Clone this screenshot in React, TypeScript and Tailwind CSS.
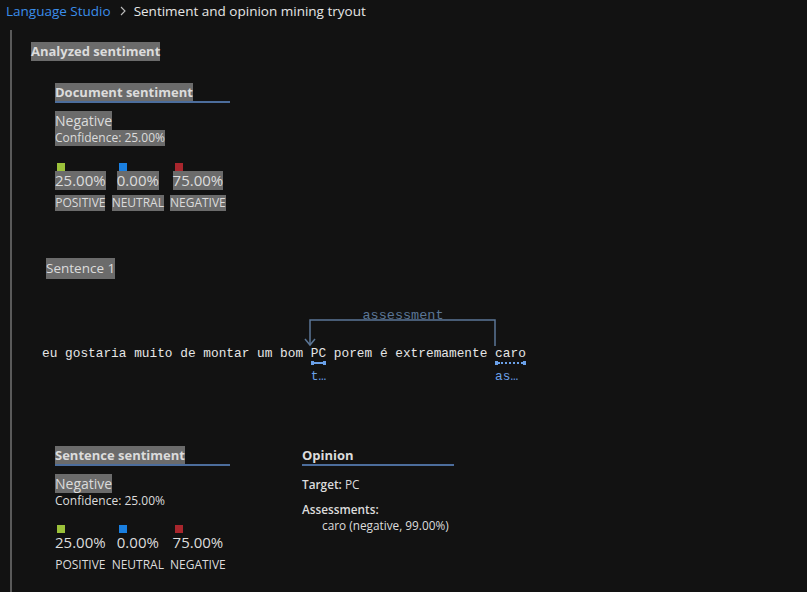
import React from 'react';

const HL = 'bg-[#6b6b6b]';

type Score = { label: string; value: string; color: string };

const SCORES: Score[] = [
  { label: 'POSITIVE', value: '25.00%', color: 'bg-[#9bc13a]' },
  { label: 'NEUTRAL', value: '0.00%', color: 'bg-[#1a7fe0]' },
  { label: 'NEGATIVE', value: '75.00%', color: 'bg-[#a8262d]' },
];

const SectionTitle: React.FC<{ title: string; width: string; highlight?: boolean }> = ({ title, width, highlight }) => (
  <div className={`${width} flex border-b-2 border-[#4c6d9c]`}>
    <span className={`${highlight ? HL : ''} block h-[18px] leading-[18px] text-[13px] font-bold text-[#dcdcdc]`}>{title}</span>
  </div>
);

const Scores: React.FC<{ highlight?: boolean }> = ({ highlight }) => (
  <div className="flex gap-[6px]">
    {SCORES.map((s) => (
      <div key={s.label} className="flex flex-col items-center">
        <div className="flex flex-col items-start">
          <div className={`w-[8px] h-[8px] ml-[2px] ${s.color}`} />
          <span className={`${highlight ? HL : ''} block h-[19px] leading-[19px] text-[15px] text-[#dcdcdc]`}>{s.value}</span>
        </div>
        <span className={`${highlight ? HL : ''} mt-[5px] block h-[16px] leading-[16px] text-[12px] text-[#dcdcdc]`}>{s.label}</span>
      </div>
    ))}
  </div>
);

const Sentence: React.FC = () => (
  <div className="relative h-[85px] pt-[41px] font-['Liberation_Mono',monospace] text-[12.8px] leading-[16px] text-[#e6e6e6]">
    <svg className="absolute left-0 top-0" width="480" height="45" viewBox="0 0 480 45">
      <path d="M453 41 V15 H268 V40" fill="none" stroke="#5b7696" strokeWidth="1.5" />
      <path d="M263 34 L268 40 L273 34" fill="none" stroke="#5b7696" strokeWidth="1.5" />
      <text x="361" y="14" textAnchor="middle" fontFamily="Liberation Mono, monospace" fontSize="13.5" fill="#5b7696">assessment</text>
    </svg>
    <div className="whitespace-pre">
      <span>eu gostaria muito de montar um bom </span>
      <span className="relative inline-block">
        PC
        <span className="absolute left-0 right-0 top-[15px] flex items-center">
          <span className="w-[3px] h-[4px] bg-[#6aa0e8]" />
          <span className="flex-1 h-[2px] bg-[#6aa0e8]" />
          <span className="w-[3px] h-[4px] bg-[#6aa0e8]" />
        </span>
        <span className="absolute left-0 top-[23px] text-[#6aa0e8]">t…</span>
      </span>
      <span> porem é extremamente </span>
      <span className="relative inline-block">
        caro
        <span className="absolute left-0 right-0 top-[15px] flex items-center">
          <span className="w-[3px] h-[4px] bg-[#6aa0e8]" />
          <span className="flex-1 border-t-2 border-dotted border-[#6aa0e8]" />
          <span className="w-[3px] h-[4px] bg-[#6aa0e8]" />
        </span>
        <span className="absolute left-0 top-[23px] text-[#6aa0e8]">as…</span>
      </span>
    </div>
  </div>
);

const App: React.FC = () => {
  return (
    <div className="w-[807px] h-[592px] overflow-hidden bg-[#121212] font-['Segoe_UI','Open_Sans',sans-serif] text-[#dcdcdc]">
      <div className="flex items-center h-[22px] pl-[6px] text-[13.5px]">
        <span className="text-[#3b8eea]">Language Studio</span>
        <svg className="ml-[9px] mr-[7px]" width="7" height="10" viewBox="0 0 7 10">
          <path d="M1 1 L5 5 L1 9" fill="none" stroke="#bdbdbd" strokeWidth="1.1" />
        </svg>
        <span className="text-[#e6e6e6]">Sentiment and opinion mining tryout</span>
      </div>

      <div className="ml-[10px] mt-[8px] border-l-2 border-[#5a5a5a] h-[570px] pl-[19px] pt-[12px] flex flex-col items-start">
        <span className={`${HL} block h-[19px] leading-[19px] text-[13px] font-bold`}>Analyzed sentiment</span>

        <div className="ml-[24px] mt-[22px]">
          <SectionTitle title="Document sentiment" width="w-[175px]" highlight />
          <div className="mt-[8px] flex flex-col items-start">
            <span className={`${HL} block h-[19px] leading-[19px] text-[14px]`}>Negative</span>
            <span className={`${HL} block h-[16px] leading-[16px] text-[12px]`}>Confidence: 25.00%</span>
          </div>
          <div className="mt-[17px]">
            <Scores highlight />
          </div>
        </div>

        <div className="ml-[15px] mt-[47px]">
          <span className={`${HL} block h-[21px] leading-[21px] text-[13.5px]`}>Sentence 1</span>
        </div>

        <div className="ml-[11px] mt-[26px]">
          <Sentence />
        </div>

        <div className="ml-[24px] mt-[56px] flex gap-[72px]">
          <div className="w-[175px]">
            <SectionTitle title="Sentence sentiment" width="w-[175px]" highlight />
            <div className="mt-[8px] flex flex-col items-start">
              <span className={`${HL} block h-[19px] leading-[19px] text-[14px]`}>Negative</span>
              <span className="block h-[16px] leading-[16px] text-[12px]">Confidence: 25.00%</span>
            </div>
            <div className="mt-[16px]">
              <Scores />
            </div>
          </div>
          <div className="w-[152px]">
            <SectionTitle title="Opinion" width="w-[152px]" />
            <div className="mt-[10px] text-[11.8px] leading-[16px]">
              <div><span className="font-semibold">Target:</span> PC</div>
              <div className="mt-[9px] font-semibold">Assessments:</div>
              <div className="pl-[20px]">caro (negative, 99.00%)</div>
            </div>
          </div>
        </div>
      </div>
    </div>
  );
};

export default App;
